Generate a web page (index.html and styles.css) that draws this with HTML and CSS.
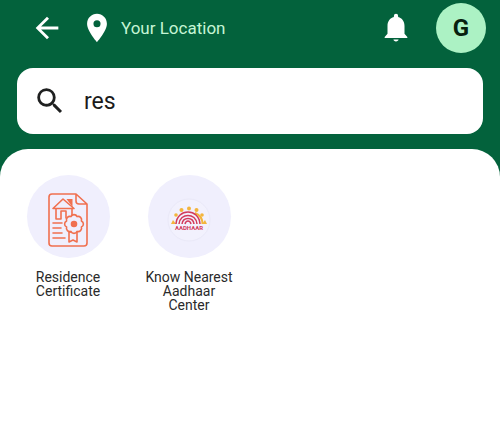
FILE: index.html
```html
<!DOCTYPE html>
<html lang="en">
<head>
  <meta charset="UTF-8">
  <meta name="viewport" content="width=device-width, initial-scale=1.0">
  <title>Search Services</title>
  <link rel="stylesheet" href="styles.css">
</head>
<body>
  <header class="top-bar">
    <button class="icon-btn back" type="button" aria-label="Back">
      <svg width="34" height="34" viewBox="0 0 24 24"><path fill="#fff" d="M20 11H7.83l5.59-5.59L12 4l-8 8 8 8 1.41-1.41L7.83 13H20v-2z"/></svg>
    </button>
    <button class="location" type="button">
      <svg width="34" height="34" viewBox="0 0 24 24"><path fill="#fff" d="M12 2C8.13 2 5 5.13 5 9c0 5.25 7 13 7 13s7-7.75 7-13c0-3.87-3.13-7-7-7zm0 9.5a2.5 2.5 0 0 1 0-5 2.5 2.5 0 0 1 0 5z"/></svg>
      <span>Your Location</span>
    </button>
    <button class="icon-btn bell" type="button" aria-label="Notifications">
      <svg width="34" height="34" viewBox="0 0 24 24"><path fill="#fff" d="M12 21.500c1 0 1.800-.5 1.800-1.300h-3.600c0 .8.8 1.300 1.800 1.300zM18 16v-5.500c0-3.070-1.640-5.640-4.500-6.320V3.500a1.500 1.500 0 0 0-3 0v.68C7.630 4.860 6 7.420 6 10.500V16l-2 2.300V19h16v-.7z"/></svg>
    </button>
    <button class="avatar" type="button" aria-label="Account">G</button>
  </header>

  <form class="search-box">
    <label for="search" aria-label="Search">
      <svg width="34" height="34" viewBox="0 0 24 24"><path fill="#1f2020" d="M15.5 14h-.79l-.28-.27A6.471 6.471 0 0 0 16 9.500 6.500 6.500 0 1 0 9.500 16c1.610 0 3.090-.59 4.230-1.570l.27.28v.79l5 4.990L20.490 19l-4.990-5zm-6 0C7.010 14 5 11.990 5 9.500S7.010 5 9.500 5 14 7.010 14 9.500 11.990 14 9.500 14z"/></svg>
    </label>
    <input type="text" id="search" value="res">
  </form>

  <main class="results">
    <a class="service" href="#residence">
      <span class="service-icon">
        <svg width="40" height="54" viewBox="0 0 40 54" fill="none" stroke="#f0704f" stroke-width="1.600" stroke-linejoin="round" stroke-linecap="round">
          <!-- paper -->
          <path d="M28 1H4a3 3 0 0 0-3 3v46a3 3 0 0 0 3 3h32a3 3 0 0 0 3-3V11zM28 1v7a3 3 0 0 0 3 3h8"/>
          <!-- house -->
          <path d="M5 15.500L15 6l11 9.500zM8 16v10h5v-8h5v7M24 16v6"/>
          <path fill="#f0704f" stroke="none" d="M18.500 6h6v8z"/>
          <path d="M5 30h9M5 35h8M5 40h9M5 45h12"/>
          <!-- seal -->
          <path fill="#f0effd" d="M21 39v10l4-2 4 2V39z"/>
          <path fill="#f0effd" d="M33.400 34.100a3.400 3.400 0 0 1-4.300 4.300a3.400 3.400 0 0 1-6.200 0a3.400 3.400 0 0 1-4.300-4.300a3.400 3.400 0 0 1 0-6.200a3.400 3.400 0 0 1 4.300-4.300a3.400 3.400 0 0 1 6.200 0a3.400 3.400 0 0 1 4.300 4.300a3.400 3.400 0 0 1 0 6.200z"/>
          <circle cx="26" cy="31" r="2.500" fill="#f0704f"/>
        </svg>
      </span>
      <span class="service-name">Residence Certificate</span>
    </a>
    <a class="service" href="#aadhaar">
      <span class="service-icon">
        <svg width="44" height="44" viewBox="0 0 44 44">
          <circle cx="22" cy="22" r="21" fill="#f2f1fd" stroke="#eae9f8"/>
          <!-- sun rays -->
          <g fill="#f3b53c">
            <circle cx="22" cy="10.500" r="2"/>
            <circle cx="14.500" cy="12" r="2"/>
            <circle cx="29.500" cy="12" r="2"/>
            <circle cx="9" cy="17" r="1.800"/>
            <circle cx="35" cy="17" r="1.800"/>
            <path d="M4 26l2-4 3 4zM40 26l-2-4-3 4z"/>
          </g>
          <path d="M28 15c5 2 7.500 6 7.500 11" fill="none" stroke="#f3b53c" stroke-width="2"/>
          <!-- fingerprint -->
          <g fill="none" stroke="#d23b5b" stroke-width="1.500">
            <path d="M9 26c1-16 23-16 24 0"/>
            <path d="M12 26c1-11.500 17-11.500 18 0"/>
            <path d="M15 26c1-7.500 11-7.500 12 0"/>
            <path d="M18 26c1-4 5-4 6 0"/>
          </g>
          <text class="logo-text" x="22" y="32" text-anchor="middle">AADHAAR</text>
        </svg>
      </span>
      <span class="service-name">Know Nearest Aadhaar Center</span>
    </a>
  </main>
</body>
</html>
```
FILE: styles.css
```css
* {
  box-sizing: border-box;
}
body {
  margin: 0;
  min-height: 100vh;
  display: flex;
  flex-direction: column;
  background-color: #03623c;
  font-family: Roboto, sans-serif;
}
button {
  padding: 0;
  border: none;
  background: none;
  font-family: inherit;
  cursor: pointer;
}
svg {
  display: block;
}
.top-bar {
  display: flex;
  align-items: center;
  height: 56px;
  padding: 0 14px 0 30px;
}
.location {
  display: flex;
  align-items: center;
  gap: 7px;
  margin-left: 16px;
  color: #c5f5d5;
  font-size: 17px;
}
.bell {
  margin-left: auto;
}
.avatar {
  width: 50px;
  height: 50px;
  margin-left: 23px;
  border-radius: 50%;
  background-color: #acf2c4;
  color: #07210f;
  font-size: 24px;
  font-weight: bold;
}
.search-box {
  display: flex;
  align-items: center;
  gap: 17px;
  height: 66px;
  margin: 12px 17px 0;
  padding: 0 16px;
  border-radius: 16px;
  background-color: #fff;
}
.search-box input {
  flex: 1;
  min-width: 0;
  padding: 0;
  border: none;
  outline: none;
  background: none;
  color: #1b1b1b;
  font-family: inherit;
  font-size: 23px;
}
.results {
  flex: 1;
  display: flex;
  align-items: flex-start;
  gap: 27px;
  margin-top: 15px;
  padding: 26px 21px;
  border-radius: 28px 28px 0 0;
  background-color: #fff;
}
.service {
  display: flex;
  flex-direction: column;
  align-items: center;
  gap: 12px;
  width: 94px;
  color: #2a2a2a;
  text-decoration: none;
}
.service-icon {
  display: flex;
  align-items: center;
  justify-content: center;
  width: 83px;
  height: 83px;
  padding-top: 6px;
  border-radius: 50%;
  background-color: #f0effd;
}
.service-name {
  font-size: 14px;
  line-height: 14px;
  text-align: center;
}
.logo-text {
  fill: #d23b5b;
  font-size: 6px;
  font-weight: bold;
}
```
